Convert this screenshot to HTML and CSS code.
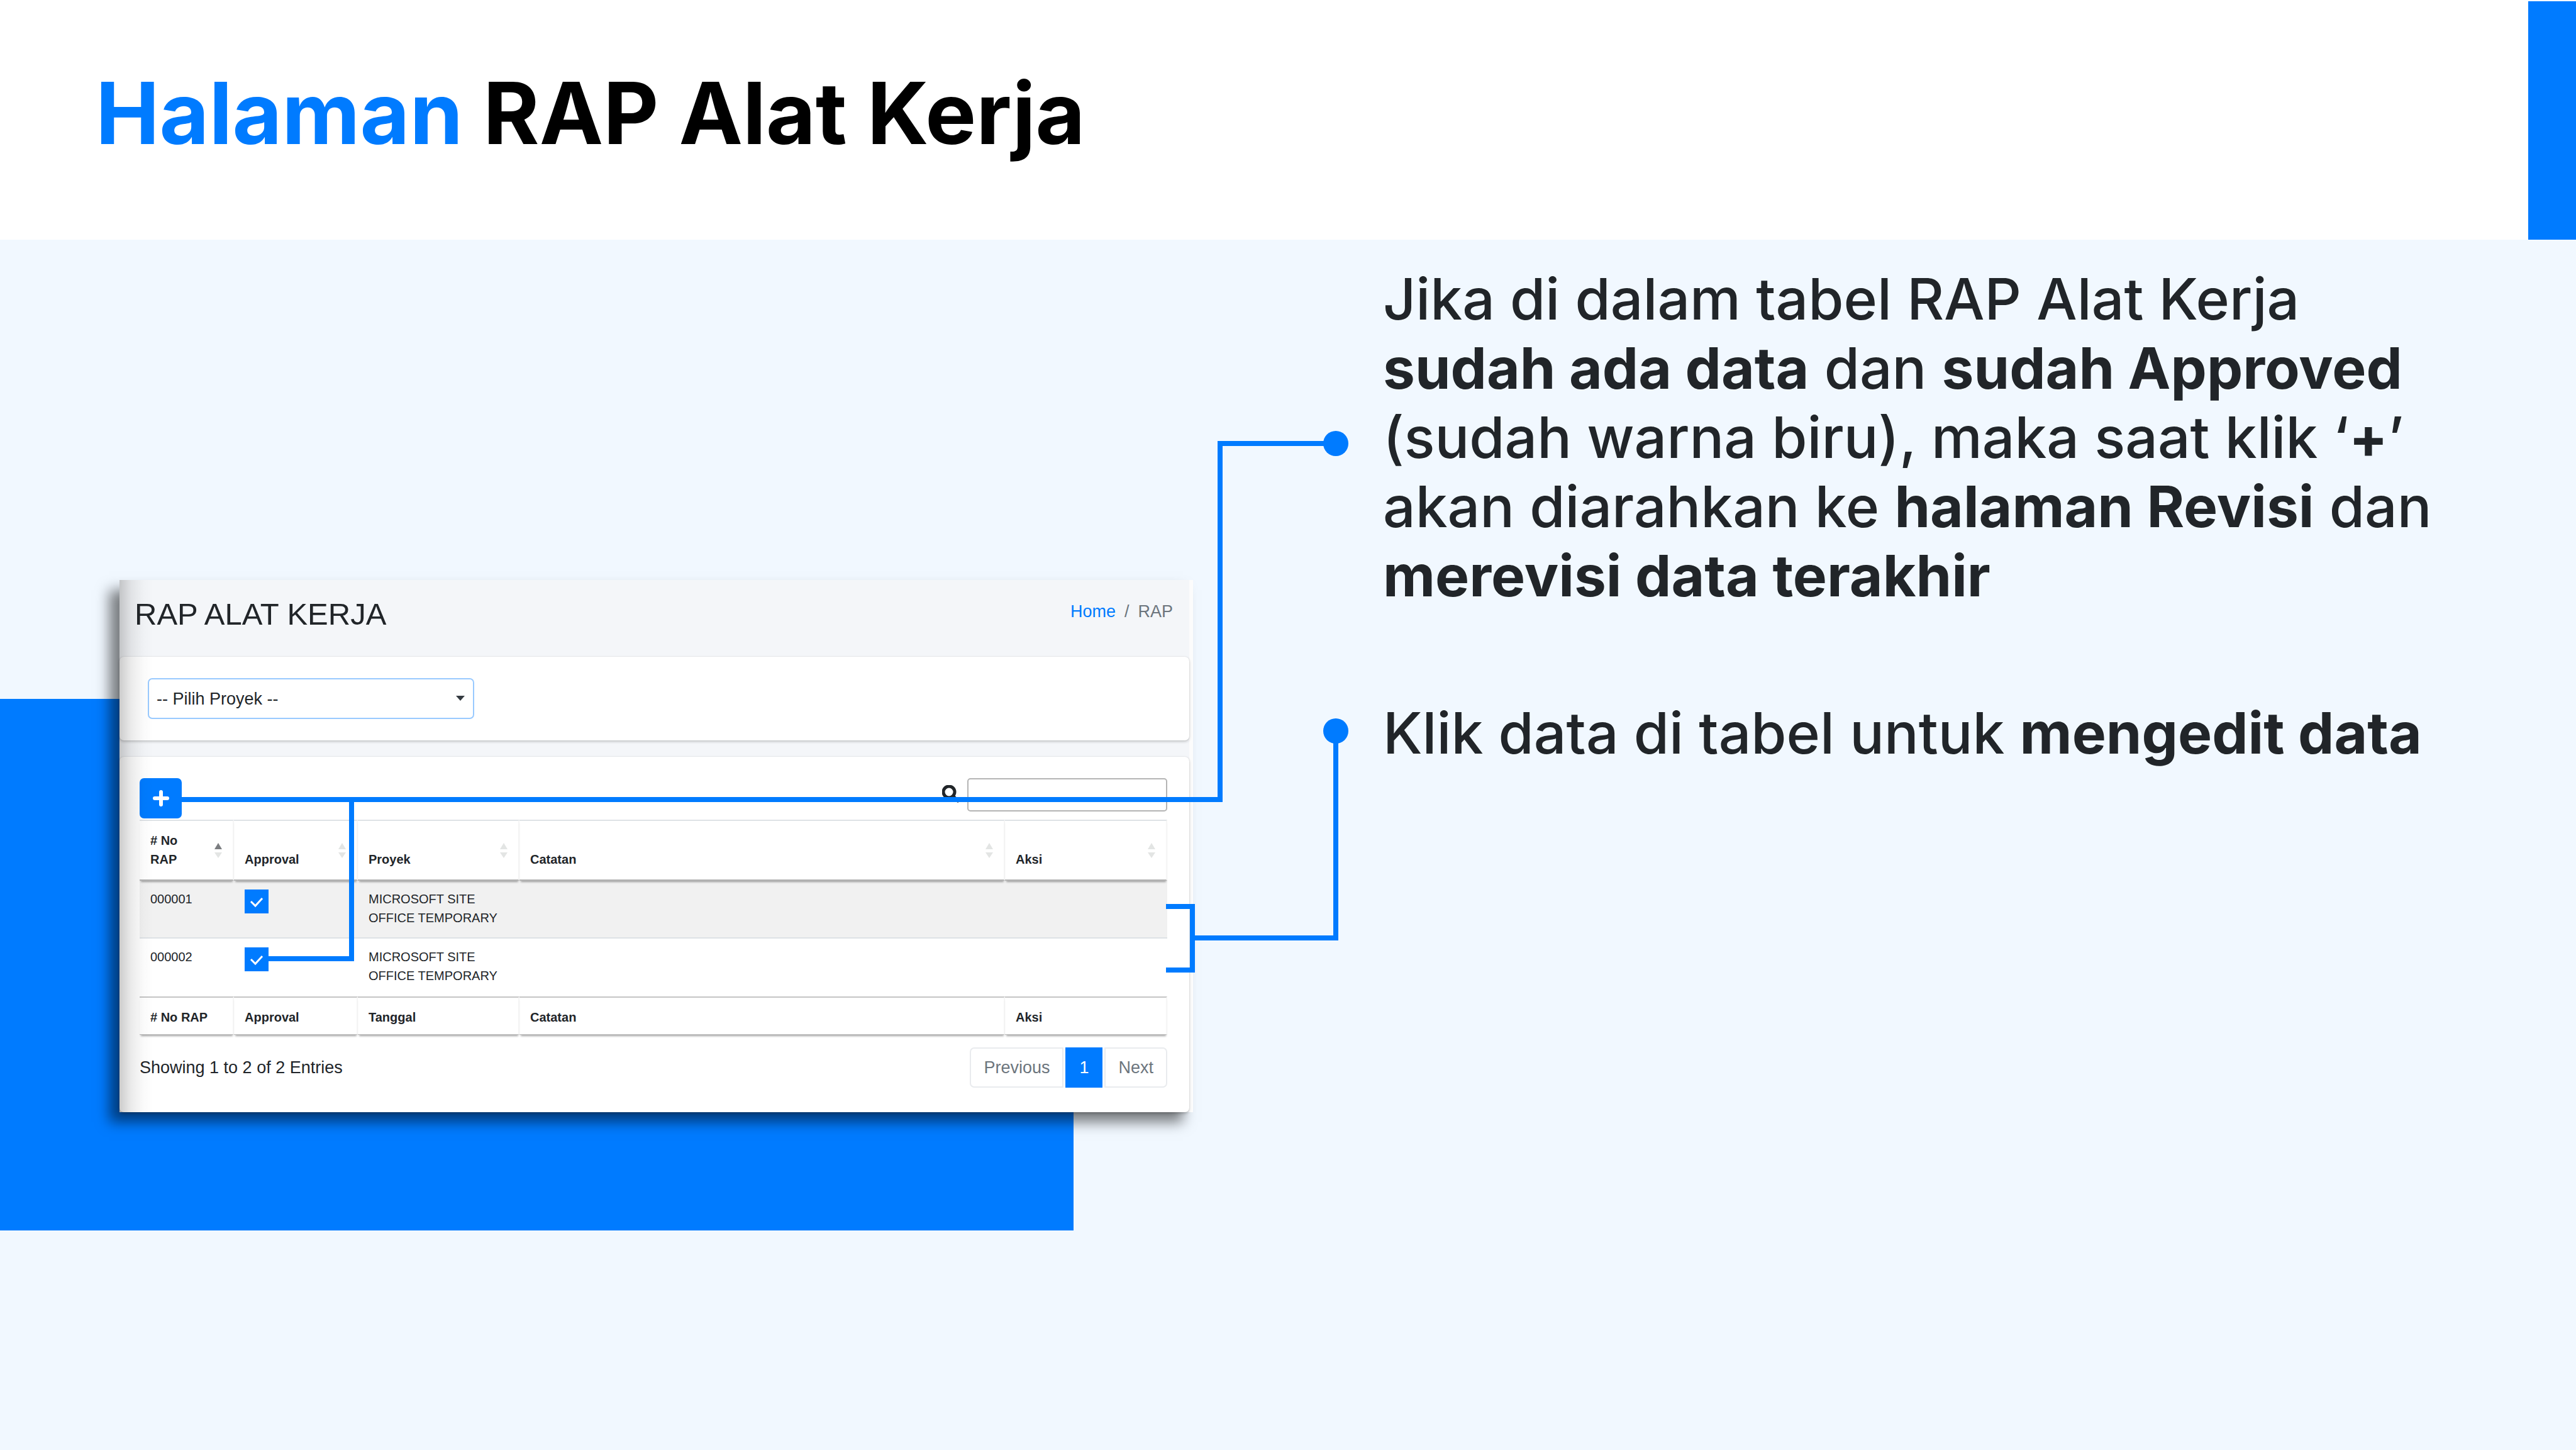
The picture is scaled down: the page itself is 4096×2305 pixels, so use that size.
FILE: index.html
```html
<!DOCTYPE html>
<html lang="id">
<head>
<meta charset="utf-8">
<title>Halaman RAP Alat Kerja</title>
<link rel="stylesheet" href="styles.css">
</head>
<body>
<header class="page-header">
  <h1 class="page-title"><span class="accent">Halaman</span> RAP Alat Kerja</h1>
  <div class="header-mark"></div>
</header>
<main class="stage">
  <div class="backdrop"></div>
  <section class="app">
    <div class="app-head">
      <h2 class="app-title">RAP ALAT KERJA</h2>
      <nav class="crumbs" aria-label="Breadcrumb"><a href="#">Home</a><span>/</span><span>RAP</span></nav>
    </div>
    <div class="panel filter">
      <div class="select-wrap">
        <select class="project" aria-label="Pilih Proyek"><option>-- Pilih Proyek --</option></select>
        <svg class="caret" viewBox="0 0 14 8"><path d="M0 0H14L7 8Z"/></svg>
      </div>
    </div>
    <div class="panel data">
      <div class="toolbar">
        <button class="add" type="button" aria-label="Tambah"><svg viewBox="0 0 26 26"><path d="M13 3V23M3 13H23"/></svg></button>
        <div class="search">
          <label for="search" aria-label="Cari"><svg viewBox="0 0 28 28"><circle cx="11" cy="11" r="9"/><path d="M18 18L25 25"/></svg></label>
          <input id="search" type="text">
        </div>
      </div>
      <table class="grid">
        <colgroup><col class="c-no"><col class="c-approval"><col class="c-project"><col class="c-note"><col class="c-action"></colgroup>
        <thead>
          <tr>
            <th><div class="head-cell"># No<br>RAP<svg class="sort asc" viewBox="0 0 12 24"><path class="up" d="M0 10L6 0L12 10Z"/><path d="M0 15H12L6 24Z"/></svg></div></th>
            <th><div class="head-cell">Approval<svg class="sort" viewBox="0 0 12 24"><path d="M0 10L6 0L12 10ZM0 15H12L6 24Z"/></svg></div></th>
            <th><div class="head-cell">Proyek<svg class="sort" viewBox="0 0 12 24"><path d="M0 10L6 0L12 10ZM0 15H12L6 24Z"/></svg></div></th>
            <th><div class="head-cell">Catatan<svg class="sort" viewBox="0 0 12 24"><path d="M0 10L6 0L12 10ZM0 15H12L6 24Z"/></svg></div></th>
            <th><div class="head-cell">Aksi<svg class="sort" viewBox="0 0 12 24"><path d="M0 10L6 0L12 10ZM0 15H12L6 24Z"/></svg></div></th>
          </tr>
        </thead>
        <tbody>
          <tr><td>000001</td><td><input class="tick" type="checkbox" checked aria-label="Approval 000001"></td><td>MICROSOFT SITE<br>OFFICE TEMPORARY</td><td></td><td></td></tr>
          <tr><td>000002</td><td><input class="tick" type="checkbox" checked aria-label="Approval 000002"></td><td>MICROSOFT SITE<br>OFFICE TEMPORARY</td><td></td><td></td></tr>
        </tbody>
        <tfoot>
          <tr><th># No RAP</th><th>Approval</th><th>Tanggal</th><th>Catatan</th><th>Aksi</th></tr>
        </tfoot>
      </table>
      <div class="table-foot">
        <span>Showing 1 to 2 of 2 Entries</span>
        <div class="pager">
          <button type="button">Previous</button>
          <button type="button" class="current">1</button>
          <button type="button">Next</button>
        </div>
      </div>
    </div>
  </section>
  <section class="notes">
    <p>Jika di dalam tabel RAP Alat Kerja<br><b>sudah ada data</b> dan <b>sudah Approved</b><br>(sudah warna biru), maka saat klik ‘<b>+</b>’<br>akan diarahkan ke <b>halaman Revisi</b> dan<br><b>merevisi data terakhir</b></p>
    <p>Klik data di tabel untuk <b>mengedit data</b></p>
  </section>
  <svg class="connectors" viewBox="0 0 4096 1924" aria-hidden="true">
    <path d="M288 890H1940V324H2124"/>
    <path d="M559 890V1143H427"/>
    <path d="M1854 1060H1896V1161H1854M1896 1110H2124V781"/>
    <circle cx="2124" cy="324" r="20"/>
    <circle cx="2124" cy="781" r="20"/>
  </svg>
</main>
</body>
</html>
```
FILE: styles.css
```css
:root {
  --blue: #007bff;
  --ink: #212529;
  --sky: #f1f8ff;
  --line: #dee2e6;
}

* { box-sizing: border-box; }

body {
  margin: 0;
  min-height: 100vh;
  display: flex;
  flex-direction: column;
  background: var(--sky);
  color: var(--ink);
  font-family: Inter, sans-serif;
}

.page-header {
  display: flex;
  justify-content: space-between;
  height: 381px;
  padding-top: 2px;
  background: #fff;
}

.page-title {
  margin: 0;
  padding: 95px 0 0 152px;
  font-size: 136px;
  line-height: 166px;
  font-weight: 700;
  color: #000;
}

.accent { color: var(--blue); }

.header-mark {
  width: 76px;
  background: var(--blue);
}

.stage {
  position: relative;
  flex: 1;
  display: flex;
  align-items: flex-start;
}

.backdrop {
  position: absolute;
  left: 0;
  top: 730px;
  width: 1707px;
  height: 845px;
  background: var(--blue);
}

.connectors {
  position: absolute;
  left: 0;
  top: 0;
  width: 4096px;
  height: 1924px;
  pointer-events: none;
  fill: none;
  stroke: var(--blue);
  stroke-width: 8px;
}

.connectors circle { fill: var(--blue); stroke: none; }

/* Application window */
.app {
  position: relative;
  flex: none;
  width: 1707px;
  margin: 541px 0 0 190px;
  padding-right: 6px;
  background: linear-gradient(90deg, #f4f6f9 1701px, #fcfcfc 1701px);
  box-shadow: -16px 16px 20px rgba(0, 0, 0, .5);
  font: 27px/40px "Liberation Sans", Arial, sans-serif;
}

/* Soft shading along the window's left edge */
.app::after {
  content: "";
  position: absolute;
  left: 0;
  top: 0;
  width: 54px;
  height: 100%;
  background: linear-gradient(90deg, rgba(0, 0, 0, .2), rgba(0, 0, 0, .08) 35%, rgba(0, 0, 0, .02) 70%, transparent);
  pointer-events: none;
}

.app-head {
  display: flex;
  justify-content: space-between;
  height: 122px;
  padding: 24px 26px 0 24px;
}

.app-title {
  margin: 0;
  font-size: 49px;
  line-height: 60px;
  font-weight: 400;
}

.crumbs {
  display: flex;
  gap: 14px;
  padding-top: 6px;
  color: #6c757d;
  line-height: 40px;
}

.crumbs a { color: var(--blue); text-decoration: none; }

.panel {
  background: #fff;
  border-radius: 7px;
  box-shadow: 0 0 2px rgba(0, 0, 0, .12), 0 2px 4px rgba(0, 0, 0, .2);
}

.filter { padding: 34px 45px; }

.select-wrap {
  position: relative;
  width: 519px;
}

.project {
  display: block;
  width: 100%;
  height: 65px;
  padding: 0 12px;
  appearance: none;
  border: 2px solid #99caff;
  border-radius: 7px;
  background: #fff;
  color: var(--ink);
  font: inherit;
}

.caret {
  position: absolute;
  right: 15px;
  top: 28px;
  width: 14px;
  height: 8px;
  fill: #343a40;
}

.data {
  margin-top: 26px;
  padding: 34px 35px 39px 32px;
}

.toolbar {
  display: flex;
  justify-content: space-between;
  height: 66px;
}

.add {
  width: 67px;
  height: 64px;
  padding: 19px 21px;
  border: 0;
  border-radius: 7px;
  background: var(--blue);
}

.add svg {
  display: block;
  width: 26px;
  height: 26px;
  fill: none;
  stroke: #fff;
  stroke-width: 6px;
  stroke-linecap: round;
}

.search { display: flex; gap: 12px; }

.search label { padding-top: 11px; }

.search svg {
  display: block;
  width: 28px;
  height: 28px;
  fill: none;
  stroke: var(--ink);
  stroke-width: 5px;
  stroke-linecap: round;
}

.search input {
  width: 318px;
  height: 53px;
  border: 2px solid #b4b4b4;
  border-radius: 5px;
  background: transparent;
  font: inherit;
}

/* Data table */
.grid {
  width: 100%;
  table-layout: fixed;
  border-collapse: separate;
  border-spacing: 0;
  font-size: 20px;
  line-height: 30px;
}

.c-no { width: 150px; }
.c-approval { width: 197px; }
.c-project { width: 257px; }
.c-action { width: 258px; }

.grid th, .grid td {
  padding: 14px 17px;
  text-align: left;
  vertical-align: top;
}

.grid th {
  position: relative;
  box-shadow: 0 4px 3px -2px rgba(0, 0, 0, .35);
  border-right: 2px solid #f6f6f6;
}

.grid thead th {
  height: 97px;
  padding: 16px 17px 17px;
  border-top: 2px solid var(--line);
  border-bottom: 2px solid #b4b4b4;
  vertical-align: bottom;
}

.head-cell { position: relative; }

.sort {
  position: absolute;
  right: 0;
  bottom: 17px;
  width: 12px;
  height: 24px;
  fill: #e3e5e4;
}

.sort .up { fill: #7b7d80; }

.grid tbody td { height: 92px; }

.grid tbody tr:first-child td {
  background: #f1f1f1;
  border-bottom: 2px solid var(--line);
}

.grid tfoot th {
  height: 61px;
  padding: 16px 17px 12px;
  border-top: 2px solid #c4c4c4;
  border-bottom: 1px solid #bbb;
}

.tick {
  display: block;
  width: 38px;
  height: 38px;
  margin: 0;
  appearance: none;
  background: var(--blue) url("data:image/svg+xml,%3Csvg xmlns='http://www.w3.org/2000/svg' viewBox='0 0 38 38'%3E%3Cpath d='M10 19L17 26L28 14' fill='none' stroke='%23fff' stroke-width='3'/%3E%3C/svg%3E") center / 38px;
}

.table-foot {
  display: flex;
  justify-content: space-between;
  align-items: center;
  margin-top: 20px;
}

.pager { display: flex; gap: 3px; }

.pager button {
  height: 64px;
  padding: 0 20px;
  border: 2px solid #e9ebee;
  background: #fff;
  color: #6c757d;
  font: inherit;
}

.pager button:first-child { border-radius: 7px 0 0 7px; }
.pager button:last-child { border-radius: 0 7px 7px 0; }

.pager .current {
  border-color: var(--blue);
  background: var(--blue);
  color: #fff;
}

/* Explanations */
.notes {
  flex: 1;
  padding: 39px 0 0 302px;
  font-size: 91px;
  font-weight: 500;
  line-height: 110px;
  white-space: nowrap;
}

.notes p { margin: 0 0 140px; }

.notes b { font-weight: 700; }
```
